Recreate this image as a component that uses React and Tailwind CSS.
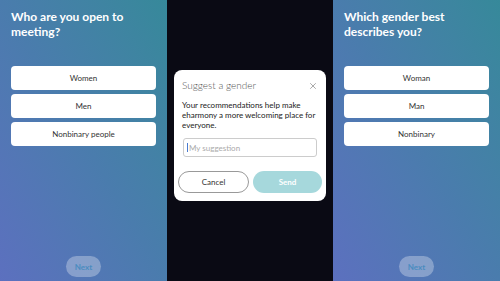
import { X } from "lucide-react";

const font = { fontFamily: "Lato, 'Open Sans', sans-serif" };

const Panel = ({ title, options }) => (
  <div className="flex h-full flex-col bg-linear-to-tr from-[#5c70bf] via-[#4a7cad] to-[#36899a] px-[11px] pt-[9px] pb-[4px]">
    <h1 className="whitespace-nowrap text-[12px] font-bold leading-[15px] text-white">{title}</h1>
    <div className="mt-[27px] flex flex-col gap-[4px]">
      {options.map((o) => (
        <button
          key={o}
          className="flex h-[24px] items-center justify-center rounded-[4px] bg-white text-[8px] text-[#333]"
        >
          {o}
        </button>
      ))}
    </div>
    <div className="mt-auto flex justify-center">
      <button className="h-[21px] w-[35px] rounded-full bg-white/30 text-[8px] font-bold text-[#4a8cc0]">
        Next
      </button>
    </div>
  </div>
);

export default function App() {
  return (
    <div className="grid h-[281px] w-[500px] grid-cols-[167px_166px_167px] overflow-hidden" style={font}>
      <Panel
        title={<>Who are you open to<br />meeting?</>}
        options={["Women", "Men", "Nonbinary people"]}
      />
      <div className="flex h-full items-start justify-center bg-[#0a0a14] pt-[70px]">
        <div className="flex w-[152px] flex-col rounded-[8px] bg-white px-[4px] pt-[8px] pb-[8px]">
          <div className="flex items-center justify-between px-[4px]">
            <span className="text-[10px] font-light text-[#555]">Suggest a gender</span>
            <X className="h-[10px] w-[10px] text-[#777]" strokeWidth={1.5} />
          </div>
          <p className="mt-[7px] px-[4px] text-[8px] leading-[10px] text-[#222]">
            Your recommendations help make eharmony a more welcoming place for everyone.
          </p>
          <div className="mx-[5px] mt-[8px] flex h-[19px] items-center rounded-[3px] border border-[#ccc] px-[3px]">
            <span className="mr-[1px] h-[9px] w-[1px] bg-[#4a7bd0]" />
            <span className="text-[8px] text-[#aaa]">My suggestion</span>
          </div>
          <div className="mt-[14px] flex gap-[4px]">
            <button className="flex h-[22px] flex-1 items-center justify-center rounded-full border border-[#999] text-[8px] text-[#333]">
              Cancel
            </button>
            <button className="flex h-[22px] flex-1 items-center justify-center rounded-full bg-[#a6d8dc] text-[8px] font-bold text-white">
              Send
            </button>
          </div>
        </div>
      </div>
      <Panel
        title={<>Which gender best<br />describes you?</>}
        options={["Woman", "Man", "Nonbinary"]}
      />
    </div>
  );
}
